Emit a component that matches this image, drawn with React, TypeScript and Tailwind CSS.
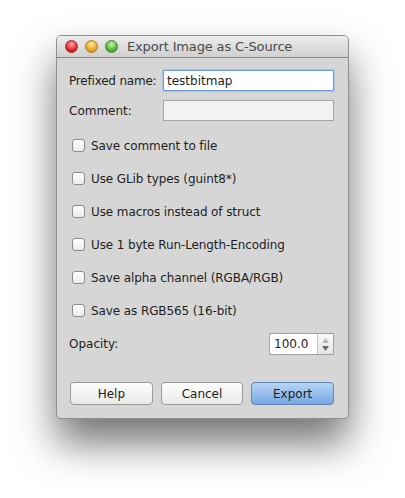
import React from "react";

const font = { fontFamily: '"DejaVu Sans", "Lucida Grande", sans-serif' };

function Light({ from, to, border }: { from: string; to: string; border: string }) {
  return (
    <span
      className="block w-[13px] h-[13px] rounded-full"
      style={{
        background: `radial-gradient(circle at 50% 30%, ${from} 0%, ${to} 70%)`,
        border: `1px solid ${border}`,
      }}
    />
  );
}

function Check({ label }: { label: string }) {
  return (
    <div className="flex items-center h-[33px] pl-[3px]">
      <span className="block w-[13px] h-[13px] rounded-[3px] border border-[#8c8c8c] bg-gradient-to-b from-white to-[#ececec] shadow-[inset_0_1px_0_#fff]" />
      <span className="ml-[6px] text-[12px] tracking-[-0.1px] text-[#1e1e1e]">{label}</span>
    </div>
  );
}

function Btn({ children, primary }: { children: React.ReactNode; primary?: boolean }) {
  return (
    <button
      className={
        "flex-1 h-[23px] rounded-[4px] border text-[12px] text-[#1e1e1e] flex items-center justify-center " +
        (primary
          ? "border-[#5f87b8] bg-gradient-to-b from-[#b7d4f3] to-[#75a9e2]"
          : "border-[#9a9a9a] bg-gradient-to-b from-[#fdfdfd] to-[#e9e9e9]")
      }
    >
      {children}
    </button>
  );
}

export default function App() {
  return (
    <div className="w-[405px] h-[498px] bg-white overflow-hidden" style={font}>
      <div className="ml-[56px] mt-[35px] w-[293px] h-[384px] rounded-[5px] bg-[#d6d6d6] border border-[#8e8e8e] shadow-[0_24px_40px_rgba(0,0,0,0.55)] flex flex-col overflow-hidden">
        <div className="h-[22px] shrink-0 flex items-center bg-gradient-to-b from-[#ececec] to-[#d0d0d0] border-b border-[#8a8a8a] pl-[8px]">
          <div className="flex gap-[7px]">
            <Light from="#ffa3a3" to="#d3171c" border="#a8282b" />
            <Light from="#ffe7a6" to="#e49a12" border="#b07a1e" />
            <Light from="#cdf5ab" to="#43a82a" border="#3f8a2c" />
          </div>
          <span className="ml-[9px] text-[13px] tracking-[-0.15px] text-[#4a4a4a]">Export Image as C-Source</span>
        </div>
        <div className="flex flex-col pl-[12px] pr-[14px] pt-[12px]">
          <div className="flex items-center h-[21px]">
            <span className="w-[94px] text-[12px] tracking-[-0.2px] text-[#1e1e1e]">Prefixed name:</span>
            <div className="flex-1 h-[21px] bg-white border border-[#6b9bd6] rounded-[1px] shadow-[0_0_0_1px_#a9c7ec] flex items-center px-[3px] text-[12px] text-[#1e1e1e]">
              testbitmap
            </div>
          </div>
          <div className="flex items-center h-[21px] mt-[9px]">
            <span className="w-[94px] text-[12px] text-[#1e1e1e]">Comment:</span>
            <div className="flex-1 h-[21px] bg-[#f2f2f2] border border-[#a5a5a5]" />
          </div>
          <div className="flex flex-col mt-[8px]">
            <Check label="Save comment to file" />
            <Check label="Use GLib types (guint8*)" />
            <Check label="Use macros instead of struct" />
            <Check label="Use 1 byte Run-Length-Encoding" />
            <Check label="Save alpha channel (RGBA/RGB)" />
            <Check label="Save as RGB565 (16-bit)" />
          </div>
          <div className="flex items-center justify-between mt-[6px] h-[22px]">
            <span className="text-[12px] text-[#1e1e1e]">Opacity:</span>
            <div className="flex h-[22px] w-[65px] border border-[#a0a0a0] bg-white">
              <div className="flex-1 flex items-center pl-[4px] text-[12px] text-[#1e1e1e]">100.0</div>
              <div className="w-[16px] border-l border-[#c4c4c4] bg-gradient-to-b from-[#fafafa] to-[#e6e6e6] flex flex-col items-center justify-center gap-[3px]">
                <svg width="7" height="5" viewBox="0 0 7 5"><path d="M3.5 0L7 5H0z" fill="#b5b5b5" /></svg>
                <svg width="7" height="5" viewBox="0 0 7 5"><path d="M0 0H7L3.5 5z" fill="#6b6b6b" /></svg>
              </div>
            </div>
          </div>
          <div className="flex gap-[8px] mt-[27px] pl-[1px]">
            <Btn>Help</Btn>
            <Btn>Cancel</Btn>
            <Btn primary>Export</Btn>
          </div>
        </div>
      </div>
    </div>
  );
}
